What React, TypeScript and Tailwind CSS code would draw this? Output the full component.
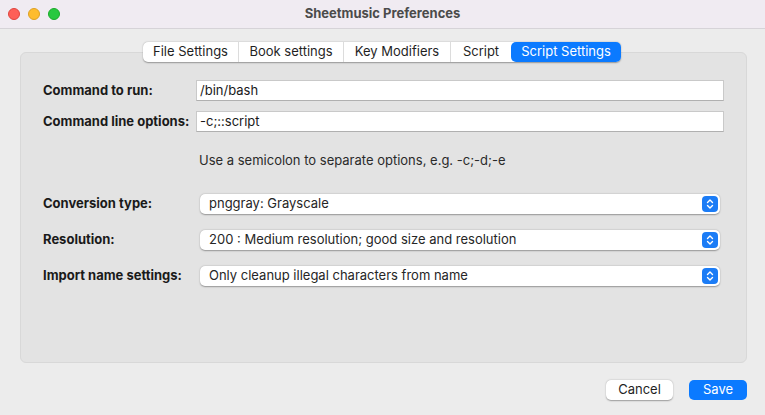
import React from 'react'

const tabs = ['File Settings', 'Book settings', 'Key Modifiers', 'Script', 'Script Settings']
const tabWidths = ['w-[96px]', 'w-[105px]', 'w-[107px]', 'w-[60px]', 'w-[110px]']

function Stepper() {
  return (
    <div className="w-[16px] h-[16px] rounded-[4px] bg-[#1b7cf6] flex items-center justify-center">
      <svg width="8" height="12" viewBox="0 0 8 12" fill="none" stroke="white" strokeWidth="1.4" strokeLinecap="round" strokeLinejoin="round">
        <path d="M1.5 4.5L4 2l2.5 2.5" />
        <path d="M1.5 7.5L4 10l2.5-2.5" />
      </svg>
    </div>
  )
}

function Select({ value }: { value: string }) {
  return (
    <div className="ml-[4px] w-[520px] h-[20px] bg-white rounded-[5px] shadow-[0_0.5px_1.5px_rgba(0,0,0,0.35)] flex items-center justify-between pl-[9px] pr-[2px] text-[13px] text-[#262626]">
      <span>{value}</span>
      <Stepper />
    </div>
  )
}

function Label({ children }: { children: React.ReactNode }) {
  return <div className="w-[153px] shrink-0 font-bold text-[13px] text-[#1a1a1a]">{children}</div>
}

export default function App() {
  return (
    <div className="w-[765px] h-[415px] bg-[#ececec] flex flex-col overflow-hidden" style={{ fontFamily: 'Inter, "Liberation Sans", sans-serif' }}>
      {/* Title bar */}
      <div className="relative h-[29px] shrink-0 bg-[#f0ebf2] border-b border-[#d6d3d8] flex items-center justify-center">
        <div className="absolute left-[8px] top-[8px] flex gap-[8px]">
          <div className="w-[12px] h-[12px] rounded-full bg-[#fe5f57] border border-[#e0443e]" />
          <div className="w-[12px] h-[12px] rounded-full bg-[#febc2e] border border-[#dea123]" />
          <div className="w-[12px] h-[12px] rounded-full bg-[#28c840] border border-[#1aab29]" />
        </div>
        <span className="font-bold text-[13px] text-[#4b4b4b]">Sheetmusic Preferences</span>
      </div>

      {/* Tabs */}
      <div className="relative z-10 mt-[13px] ml-[143px] flex h-[20px] w-fit rounded-[5px] bg-white shadow-[0_0.5px_1.5px_rgba(0,0,0,0.35)] text-[13px] text-[#1f1f1f]">
        {tabs.map((t, i) => (
          <div
            key={t}
            className={`${tabWidths[i]} flex items-center justify-center ${
              i === tabs.length - 1
                ? 'bg-[#0b7aff] text-white rounded-[5px]'
                : i < tabs.length - 2
                ? 'border-r border-[#dcdcdc]'
                : ''
            }`}
          >
            {t}
          </div>
        ))}
      </div>

      {/* Panel */}
      <div className="-mt-[10px] ml-[20px] w-[727px] h-[311px] bg-[#e3e3e3] border border-[#d8d8d8] rounded-[6px] flex flex-col pl-[22px]">
        <div className="mt-[27px] flex items-center h-[21px]">
          <Label>Command to run:</Label>
          <div className="w-[528px] h-[21px] bg-white border border-[#c9c9c9] border-b-[#b0b0b0] flex items-center pl-[3px] text-[13px] text-[#1a1a1a]">/bin/bash</div>
        </div>
        <div className="mt-[10px] flex items-center h-[21px]">
          <Label>Command line options:</Label>
          <div className="w-[528px] h-[21px] bg-white border border-[#c9c9c9] border-b-[#b0b0b0] flex items-center pl-[3px] text-[13px] text-[#1a1a1a]">-c;::script</div>
        </div>
        <div className="mt-[20px] ml-[156px] text-[13px] text-[#2a2a2a] h-[16px] leading-[16px]">
          Use a semicolon to separate options, e.g. -c;-d;-e
        </div>

        <div className="mt-[26px] flex items-center h-[20px]">
          <Label>Conversion type:</Label>
          <Select value="pnggray: Grayscale" />
        </div>
        <div className="mt-[16px] flex items-center h-[20px]">
          <Label>Resolution:</Label>
          <Select value="200 : Medium resolution; good size and resolution" />
        </div>
        <div className="mt-[16px] flex items-center h-[20px]">
          <Label>Import name settings:</Label>
          <Select value="Only cleanup illegal characters from name" />
        </div>
      </div>

      {/* Buttons */}
      <div className="mt-[17px] flex justify-end gap-[16px] pr-[18px]">
        <button className="w-[67px] h-[20px] bg-white rounded-[5px] shadow-[0_0.5px_1.5px_rgba(0,0,0,0.35)] text-[13px] text-[#1f1f1f]">Cancel</button>
        <button className="w-[58px] h-[20px] bg-[#0b7aff] rounded-[5px] text-[13px] text-white">Save</button>
      </div>
    </div>
  )
}
